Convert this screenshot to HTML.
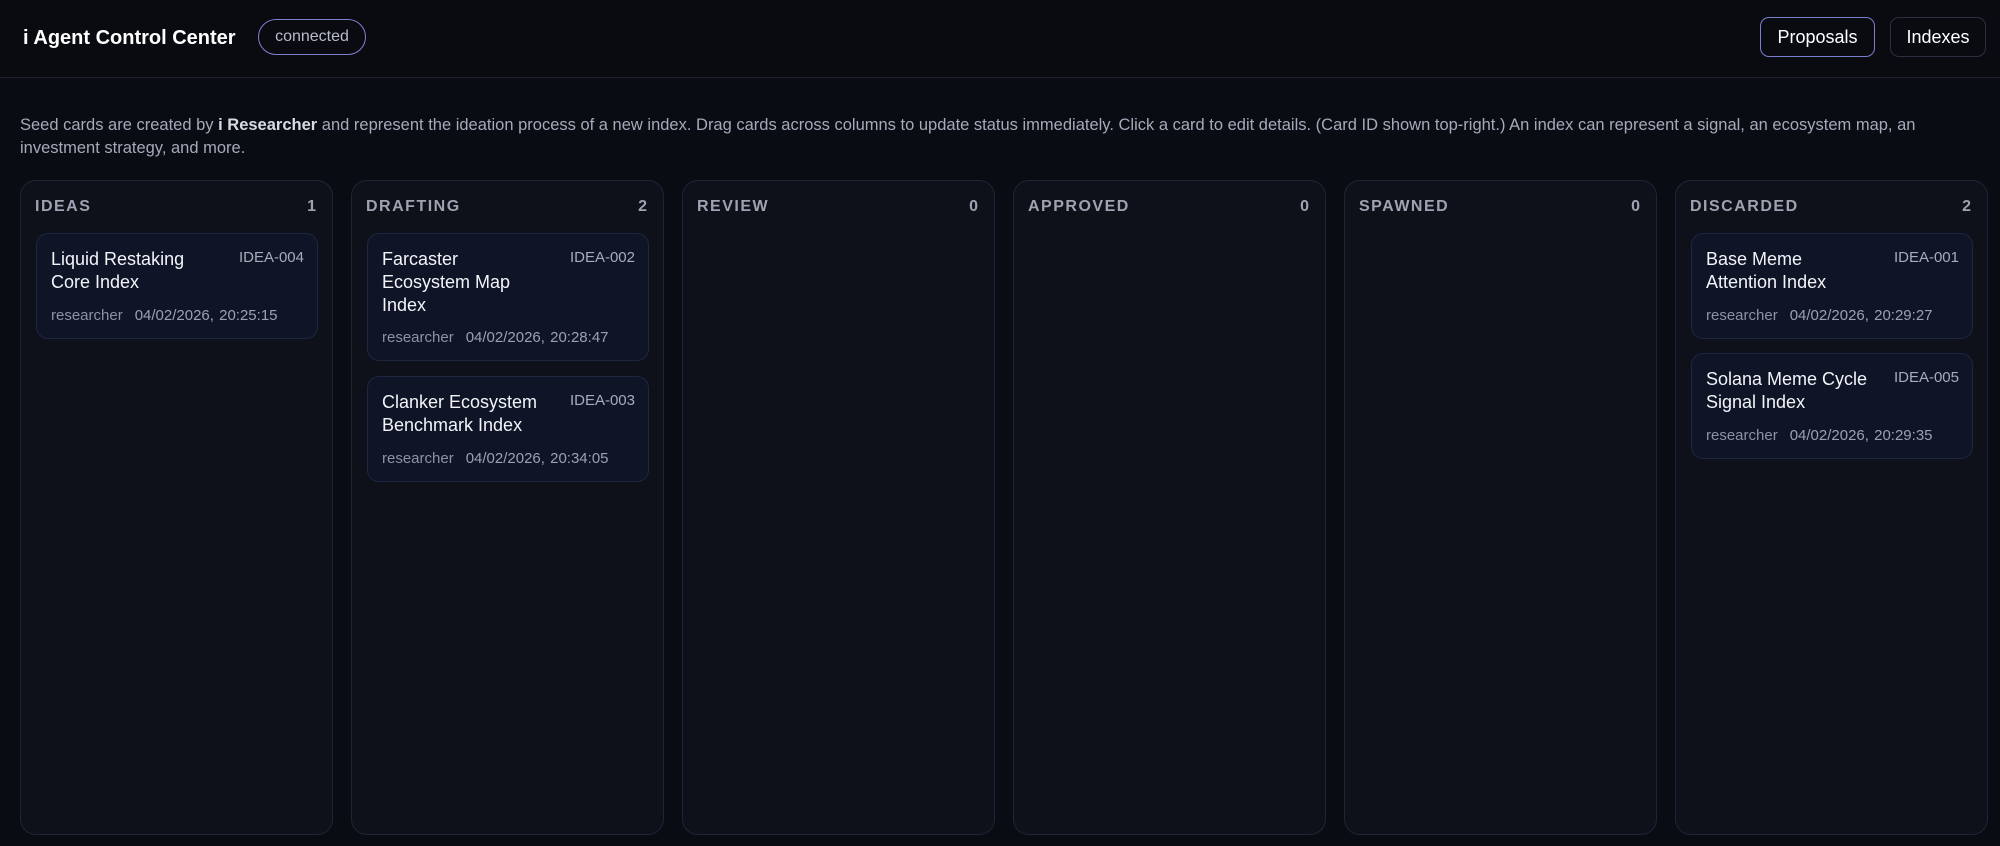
<!DOCTYPE html>
<html><head><meta charset="utf-8"><style>
*{box-sizing:border-box;margin:0;padding:0}
body{width:2000px;height:846px;background:#0a0c13;font-family:"Liberation Sans",sans-serif;color:#e6e8ef;overflow:hidden;position:relative}
.hdr{position:absolute;left:0;top:0;width:2000px;height:78px;border-bottom:1px solid #1c2232;background:#090b11}
.title{position:absolute;left:23px;top:27px;font-size:20px;font-weight:bold;color:#fff}
.pill{position:absolute;left:258px;top:19px;width:108px;height:36px;border:1.5px solid #7f7fd0;border-radius:18px;font-size:16px;color:#b8bccb;text-align:center;line-height:34px}
.btn{position:absolute;top:17px;height:40px;border-radius:9px;font-size:18px;color:#fff;text-align:center;line-height:38px;border:1px solid #2a3042}
.desc{position:absolute;left:20px;top:114px;width:1975px;font-size:16.5px;line-height:23px;color:#a5aaba}
.desc b{color:#d8dbe4}
.col{position:absolute;top:180px;width:313px;height:655px;background:#0e111a;border:1px solid #1f2536;border-radius:16px}
.ch{position:absolute;left:14px;top:17px;right:16px;font-size:16px;font-weight:bold;letter-spacing:1.5px;color:#9ea3b2}
.ch span{float:right;letter-spacing:0}
.card{position:absolute;left:15px;width:282px;background:#0f1527;border:1px solid #1d2740;border-radius:12px}
.ct{position:absolute;left:14px;top:14px;font-size:18px;line-height:23px;color:#f2f4f8}
.id{position:absolute;right:13px;top:15px;font-size:15px;color:#a7acba}
.meta{position:absolute;left:14px;bottom:14px;font-size:15px;color:#8d93a3;word-spacing:1px}
.meta i{font-style:normal;margin-left:12px;color:#9ba1b0}
</style></head><body>
<div class="hdr">
<div class="title">i Agent Control Center</div>
<div class="pill">connected</div>
<div class="btn" style="left:1760px;width:115px;border:1.5px solid #7b7fd0">Proposals</div>
<div class="btn" style="left:1890px;width:96px">Indexes</div>
</div>
<div class="desc">Seed cards are created by <b>i Researcher</b> and represent the ideation process of a new index. Drag cards across columns to update status immediately. Click a card to edit details. (Card ID shown top-right.) An index can represent a signal, an ecosystem map, an investment strategy, and more.</div>

<div class="col" style="left:20px"><div class="ch">IDEAS<span>1</span></div>
<div class="card" style="top:52px;height:106px"><div class="ct">Liquid Restaking<br>Core Index</div><div class="id">IDEA-004</div><div class="meta">researcher<i>04/02/2026, 20:25:15</i></div></div>
</div>
<div class="col" style="left:351px"><div class="ch">DRAFTING<span>2</span></div>
<div class="card" style="top:52px;height:128px"><div class="ct">Farcaster<br>Ecosystem Map<br>Index</div><div class="id">IDEA-002</div><div class="meta">researcher<i>04/02/2026, 20:28:47</i></div></div>
<div class="card" style="top:195px;height:106px"><div class="ct">Clanker Ecosystem<br>Benchmark Index</div><div class="id">IDEA-003</div><div class="meta">researcher<i>04/02/2026, 20:34:05</i></div></div>
</div>
<div class="col" style="left:682px"><div class="ch">REVIEW<span>0</span></div></div>
<div class="col" style="left:1013px"><div class="ch">APPROVED<span>0</span></div></div>
<div class="col" style="left:1344px"><div class="ch">SPAWNED<span>0</span></div></div>
<div class="col" style="left:1675px"><div class="ch">DISCARDED<span>2</span></div>
<div class="card" style="top:52px;height:106px"><div class="ct">Base Meme<br>Attention Index</div><div class="id">IDEA-001</div><div class="meta">researcher<i>04/02/2026, 20:29:27</i></div></div>
<div class="card" style="top:172px;height:106px"><div class="ct">Solana Meme Cycle<br>Signal Index</div><div class="id">IDEA-005</div><div class="meta">researcher<i>04/02/2026, 20:29:35</i></div></div>
</div>
</body></html>
